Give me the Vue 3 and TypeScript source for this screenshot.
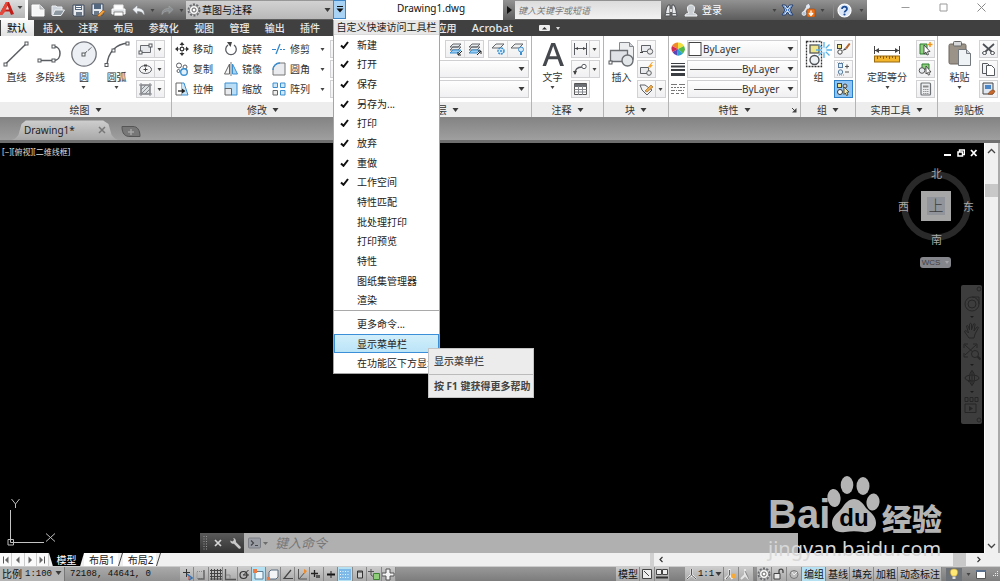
<script setup lang="ts">
import { h, ref } from 'vue'

type IconDef = [number, number, string]

const g = 'fill="none" stroke="#5a5d62"'
const b = 'fill="none" stroke="#3b8fd0"'
const node = (x: number, y: number) =>
  `<rect x="${x - 1.5}" y="${y - 1.5}" width="3" height="3" fill="#fff" stroke="#55585c"/>`

const icons: Record<string, IconDef> = {
  brand: [26, 18, `<path d="M0 13 6 2h3l5 12-3 1-1.500-3.500-4.500 0L2 15H0z" fill="#c11d18"/><path d="M6 2h2L5.500 11 2 15H0v-2z" fill="#e5483b"/><path d="M7.500 5.500 9 9.500H5.800z" fill="#f3dada"/><path d="M17.500 6h5L20 9z" fill="#444"/>`],
  caret: [7, 4, `<path d="M0.500 0h6L3.500 4z" fill="#3a3a3a"/>`],
  caretS: [5, 3, `<path d="M0.500 0h4L2.500 3z" fill="#444"/>`],
  newFile: [14, 13, `<path d="M1 1h8l4 4v7H1z" fill="#f6f6f6" stroke="#fff"/><path d="M9 1v4h4" fill="#c9cdd2" stroke="#aaa" stroke-width=".8"/>`],
  open: [14, 13, `<path d="M1 11V2h4l1 1h5v3" fill="#ccd3da" stroke="#edf0f3"/><path d="M1.500 11.500 4 6h9.500L10 11.500z" fill="#8d979f" stroke="#eceff1"/>`],
  save: [13, 13, `<path d="M1 1h11v11H2l-1-1z" fill="#e6eaef" stroke="#3f4d60"/><path d="M3 1h7v5H3z" fill="#53677f"/><path d="M4 8h6v4H4z" fill="#6a7787"/><path d="M4 2.500h5M4 4.500h5" stroke="#fff"/>`],
  saveAs: [15, 14, `<path d="M1 1h11v11H2l-1-1z" fill="#e6eaef" stroke="#3f4d60"/><path d="M3 1h7v5H3z" fill="#53677f"/><path d="M3 8h5v4H3z" fill="#6a7787"/><path d="m6 13 6-6 2 1.500-5 5z" fill="#f1a23c" stroke="#8e4d10" stroke-width=".6"/>`],
  print: [15, 13, `<path d="M3 5V1h9v4" fill="#fff" stroke="#eee"/><path d="M1 5h13v5H1z" fill="#dfe2e5" stroke="#fff"/><path d="M3 8h9v4H3z" fill="#fff" stroke="#666" stroke-width=".7"/>`],
  undo: [13, 11, `<path d="M1 4.500 5 1v2.500c5 0 7 2 7 6C10.500 7 9 6 5 6v2.500z" fill="#eef2f6" stroke="#dfe6ec" stroke-width=".5"/>`],
  redo: [13, 11, `<path d="M12 4.500 8 1v2.500c-5 0-7 2-7 6C2.500 7 4 6 8 6v2.500z" fill="#8c8f92" stroke="#a5a7a9" stroke-width=".6"/>`],
  gear: [14, 14, `<circle cx="7" cy="7" r="5.500" fill="#f4f4f4" stroke="#66696d" stroke-width="2" stroke-dasharray="2.100 1.350"/><circle cx="7" cy="7" r="4.600" fill="#f0f0f0" stroke="#777" stroke-width=".8"/><circle cx="7" cy="7" r="2" fill="#fff" stroke="#666"/>`],
  qatMore: [8, 7, `<path d="M1 .5h6" stroke="#111"/><path d="M0.500 2.500h7L4 6.500z" fill="#111"/>`],
  play: [5, 8, `<path d="M0 0v8l5-4z" fill="#111"/>`],
  binocular: [14, 13, `<path d="M1 12 2.500 4 4 1h2v11zM13 12l-1.500-8L10 1H8v11z" fill="#e7e9eb" stroke="#4c4f52"/><path d="M6 5h2v3H6z" fill="#ddd"/><path d="M1.500 9.500H6M8 9.500h4.500" stroke="#6a6d70"/>`],
  person: [14, 13, `<path d="M1 12c0-2 2-2.500 4-3C3.500 7 3.500 5.500 3.500 4c0-4 7-4 7 0 0 1.500 0 3-1.500 5 2 .5 4 1 4 3z" fill="#c9ced3" stroke="#f3f5f6"/>`],
  exchange: [13, 12, `<path d="M1 1h3.500l2 3 2-3H12L9 6l3 5H8.500l-2-3-2 3H1l3-5z" fill="#d8e6f5" stroke="#223f70"/><path d="M2.500 2 6 6l-3.500 4M10.500 2 7 6l3.500 4" fill="none" stroke="#3b6fc0"/>`],
  share: [15, 13, `<path d="M2 10 7 2v4" fill="none" stroke="#dfe6ee" stroke-width="2"/><circle cx="3" cy="9.500" r="2" fill="#b4c6da" stroke="#fff" stroke-width=".6"/><circle cx="7" cy="2.500" r="2" fill="#dfe8f2"/><rect x="6" y="5" width="8" height="8" rx="1" fill="#e8731a" stroke="#a74708" stroke-width=".6"/><path d="M10 6.500v3.500M8 9l2 2.500L12 9" stroke="#fff" stroke-width="1.300" fill="none"/>`],
  help: [15, 15, `<circle cx="7.500" cy="7.500" r="6.500" fill="#dbe7f6" stroke="#fff" stroke-width="1.200"/><path d="M5 6c0-3.200 5-3 5 0 0 1.700-2.500 1.700-2.500 3.500" stroke="#1b4b94" stroke-width="1.700" fill="none"/><circle cx="7.500" cy="11.500" r="1.100" fill="#1b4b94"/>`],
  winMin: [9, 9, `<path d="M.5 4.500h8" stroke="#9a9a9a"/>`],
  winMax: [9, 9, `<path d="M1 1h7v7H1z" fill="none" stroke="#9a9a9a"/>`],
  winClose: [9, 9, `<path d="m.5.500 8 8m0-8-8 8" stroke="#8a8a8a"/>`],
  minPanel: [11, 6, `<rect width="11" height="6" rx="1" fill="#eee"/><path d="M3 4.500h5L5.500 2z" fill="#333"/>`],

  line: [28, 28, `<path d="M3 24.500 25 3" ${g} stroke-width="1.500"/>${node(3.5, 24.5)}${node(24.5, 3.5)}`],
  polyline: [28, 28, `<path d="M3 20.500h15c8 0 8-14 0-14" ${g} stroke-width="1.500"/>${node(3.5, 20.5)}${node(17.5, 20.5)}${node(17.5, 6.5)}`],
  circle: [28, 28, `<circle cx="14" cy="14" r="12.200" fill="#eceff3" stroke="#70747a" stroke-width="1.300"/><path d="m14 14 8-7" ${g} stroke-dasharray="4 1"/>${node(13.5, 14.5)}`],
  arc: [28, 28, `<path d="M4 25C5 12 13 4 25 3" ${g} stroke-width="1.500"/>${node(3.5, 25)}${node(10.5, 10.5)}${node(24.5, 3.5)}`],
  rect: [15, 12, `<path d="M2.500 2.500h10v7h-10z" fill="#e6e8eb" stroke="#66696d"/>${node(2.5, 9.5)}${node(12.5, 2.5)}`],
  ellipse: [15, 12, `<ellipse cx="7.500" cy="6.500" rx="6" ry="4" ${g}/><path d="M7.500 4.500v4M5.500 6.500h4" stroke="#444"/><path d="M6 2.500h3" stroke="#444" stroke-width="2"/>`],
  hatch: [15, 14, `<path d="M3 3h9v9H3z" fill="#dcdfe2" stroke="#77797d"/><path d="m3 8 5-5m-5 9 9-9m-5 9 5-5M1 3h13M1 12h13M3 1v13m9-13v13" stroke="#85888c" fill="none"/>`],

  move: [14, 14, `<path d="M7 0 4.500 3h5zM7 14l-2.500-3h5zM0 7l3-2.500v5zM14 7l-3-2.500v5z" fill="#333"/><path d="M7 3v8M3 7h8" stroke="#555" stroke-dasharray="2 1"/><rect x="5.500" y="5.500" width="3" height="3" fill="#fff" stroke="#444"/>`],
  rotate: [14, 14, `<path d="M4 3a5.300 5.300 0 1 0 6 0" ${g} stroke-width="1.300"/><path d="M3 0h5L6.500 5z" fill="#444"/>`],
  trim: [14, 14, `<path d="M0 7.500h4" stroke="#2f86cc"/><path d="m4 12 4-10" stroke="#2f86cc" stroke-width="1.300"/><path d="M8 7.500h6" stroke="#2f86cc" stroke-dasharray="2 1"/>`],
  copy: [14, 14, `<circle cx="4" cy="3.500" r="2.500" ${g}/><circle cx="10" cy="5" r="2" ${g}/><circle cx="3.500" cy="9" r="1.500" ${g}/><circle cx="9" cy="10" r="3.300" fill="#e1f0fa" stroke="#3b8fd0" stroke-width="1.400"/>`],
  mirror: [14, 14, `<path d="M5.500 2v10h-5z" fill="#f5f5f5" stroke="#666"/><path d="M8.500 2v10h5z" fill="#a9d4f1" stroke="#3b8fd0"/><path d="M7 0v14" stroke="#777"/>`],
  fillet: [14, 14, `<path d="M1 13V8c0-4 3-7 7-7h5v12z" fill="#e9ebee" stroke="#777"/><path d="M1 8c0-4 3-7 7-7" ${b} stroke-width="1.500"/>`],
  stretch: [14, 14, `<path d="M1 1h6v12H1z" fill="#fff" stroke="#666"/><path d="M7 1h2l4 12H7" fill="#cde6f6" stroke="#3b8fd0"/><path d="M3 9h5" stroke="#222" stroke-width="1.300"/><path d="m7 6.500 3.500 2.500L7 11.500z" fill="#222"/>`],
  scale: [14, 14, `<path d="M1 1h12v12H7V7H1z" fill="#b9def5" stroke="#3b8fd0"/><path d="M1 6.500h6.500V13H1z" fill="#e8eaed" stroke="#666"/>`],
  array: [14, 14, `<path d="M1 1h4.500v4.500H1zM8.500 1H13v4.500H8.500zM8.500 8.500H13V13H8.500z" fill="#cfe7f7" stroke="#3b8fd0"/><path d="M1 8.500h4.500V13H1z" fill="#eee" stroke="#666"/>`],

  layerA: [15, 14, `<path d="m2 5 3-3h8l-3 3zM2 8l3-3h8l-3 3z" fill="#e6e9ec" stroke="#63676b"/><path d="m2 11 3-3h8l-3 3z" fill="#9ccdf0" stroke="#3b8fd0"/><path d="m14 9-4 4m0-3v3h3" stroke="#222" fill="none"/>`],
  layerB: [15, 14, `<path d="m2 5 3-3h8l-3 3zM2 8l3-3h8l-3 3z" fill="#e6e9ec" stroke="#63676b"/><path d="m2 11 3-3h8l-3 3z" fill="#9ccdf0" stroke="#3b8fd0"/><path d="m10 13 4-4m-3 0h3v3" stroke="#222" fill="none"/>`],
  layerC: [15, 14, `<path d="m1 6 4-4h8l-4 4z" fill="#eee" stroke="#63676b"/><circle cx="10" cy="9" r="3" fill="#d3eafa" stroke="#3b8fd0" stroke-width="1.500" stroke-dasharray="2 .8"/><circle cx="10" cy="9" r="1" fill="#3b8fd0"/>`],
  layerD: [15, 14, `<path d="m1 6 4-4h8l-4 4z" fill="#eee" stroke="#63676b"/><circle cx="11" cy="7.500" r="2.500" fill="#d3eafa" stroke="#3b8fd0"/><path d="M10 10h2v3h-2z" fill="#3b8fd0"/>`],

  text: [28, 28, `<path d="M3.500 26 12.300 3h3.800L25 26h-3.800l-2.400-6.700H9.500L7 26zM10.600 16.300h7.200L14.200 6z" fill="#45484d"/>`],
  dim: [15, 14, `<path d="M1.500 1v12M13.500 1v12M2 6.500h11" ${g}/><path d="M2 6.500 5 5v3zM13 6.500 10 5v3z" fill="#444"/>`],
  leader: [15, 14, `<path d="M2 12c0-5 2-7 7-7" ${g} stroke-width="1.300"/><circle cx="11" cy="4.500" r="2.200" fill="#fff" stroke="#5a5d62"/><path d="M0 9h4l-2 4z" fill="#444"/>`],
  table: [15, 14, `<path d="M1.500 1.500h12v11h-12z" fill="#fff" stroke="#555"/><path d="M1.500 2h12v3h-12z" fill="#6b6f74"/><path d="M1.500 7.500h12m-12 2.500h12M5.500 4v9M9.500 4v9" stroke="#85898d"/>`],
  insert: [28, 28, `<path d="M11.500 2.500h10l4 4v13h-14z" fill="#eceef0" stroke="#85898e"/><path d="M21.500 2.500v4h4" fill="#cfd2d6" stroke="#85898e"/><path d="M2.500 10.500h17v11h-17z" fill="#dfe2e6" stroke="#6b6f74" stroke-width="1.300"/><circle cx="19.500" cy="20.500" r="5.500" fill="#e4e7ea" stroke="#6b6f74" stroke-width="1.400"/>${node(2.5, 22.5)}`],
  blockA: [15, 14, `<path d="M2.500 3.500h9v6h-9z" fill="#e8eaed" stroke="#5e6266"/><circle cx="11" cy="9.500" r="2.700" fill="#eee" stroke="#5e6266"/><path d="M1 10.500h3" stroke="#444"/>`],
  blockB: [15, 14, `<path d="M1.500 5.500h8v6h-8z" fill="#e8eaed" stroke="#5e6266"/><circle cx="10" cy="11" r="2.300" fill="#eee" stroke="#5e6266"/><path d="m13 0-4 5h2L9 8l5-5h-2l2-3z" fill="#f6a62c"/>`],
  blockC: [15, 14, `<path d="M1 3h5l7 5-5 5-5-5z" fill="#f2f3f4" stroke="#5e6266"/><path d="m6 9 6-6 2 2-6 5z" fill="#f0ad4b" stroke="#8d5a1b" stroke-width=".6"/>`],

  wheel: [14, 14, `<path d="M7 7 1 4A6.500 6.500 0 0 1 7 .5z" fill="#ef8b2c"/><path d="M7 7V.5A6.500 6.500 0 0 1 13 4z" fill="#f0df3c"/><path d="m7 7 6-3a6.500 6.500 0 0 1-1 7.500z" fill="#54b848"/><path d="m7 7 5 4.500a6.500 6.500 0 0 1-6 2z" fill="#2ea2cf"/><path d="m7 7-1 6.500a6.500 6.500 0 0 1-4.500-3.500z" fill="#5a44b8"/><path d="m7 7-5.500 3A6.500 6.500 0 0 1 1 4z" fill="#cf2c52"/>`],
  weights: [14, 14, `<path d="M0 1.500h14" stroke="#3b3e42"/><path d="M0 4.500h14" stroke="#3b3e42" stroke-width="2"/><path d="M0 8h14" stroke="#3b3e42" stroke-width="2"/><path d="M0 12.500h14" stroke="#3b3e42" stroke-width="3"/>`],
  dashes: [14, 14, `<path d="M0 2.500h14" stroke="#777" stroke-dasharray="6 2"/><path d="M0 5.500h14" stroke="#777" stroke-dasharray="2 1"/><path d="M0 8.500h14" stroke="#777" stroke-dasharray="4 1 1 1"/><path d="M0 11.500h14" stroke="#777" stroke-dasharray="3 2"/>`],
  swatch: [15, 14, `<rect x="1" y=".5" width="12" height="13" fill="#fff" stroke="#444"/>`],
  longLine: [54, 3, `<path d="M2 1.500h52" stroke="#555"/>`],
  shortLine: [54, 3, `<path d="M6 1.500h48" stroke="#555"/>`],
  launcher: [6, 6, `<path d="m1 1 3 3" stroke="#444"/><path d="M5.500 1v4.500H1z" fill="#444"/>`],

  group: [28, 28, `<rect x="1.500" y="1.500" width="15" height="25" fill="none" stroke="#333" stroke-width="1.300" stroke-dasharray="2 1"/><rect x="5" y="5" width="9" height="8" fill="#eee48b" stroke="#55585c" stroke-width="1.300"/><circle cx="9.500" cy="20" r="4.500" fill="#eef2f5" stroke="#4d5156" stroke-width="1.400"/><path d="M19 2v16M11 10h16M13.500 4.500l11 11m0-11-11 11" stroke="#55b2e8" stroke-width="1.300"/><circle cx="19" cy="10" r="2.500" fill="#e6f6ff"/>`],
  groupA: [15, 14, `<rect x="1.500" y="2.500" width="4" height="4" fill="#eee48b" stroke="#444"/><circle cx="4" cy="10" r="2.200" fill="#fff" stroke="#444"/><path d="m6 9 3-3 1.500 1.500z" fill="#444"/><path d="m9 6 4-5 1.500 1L11 7z" fill="#b5652b"/>`],
  groupB: [15, 14, `<rect x="2.500" y="1.500" width="4" height="4" fill="#dceefa" stroke="#5a7ca0"/><circle cx="4.500" cy="10" r="2.200" fill="#dceefa" stroke="#5a7ca0"/><path d="M9 4.500h4M11 2.500v4M9 10h4" stroke="#555"/><path d="M1 13h7M1 0h7" stroke="#888" stroke-dasharray="1 1"/>`],
  groupC: [15, 14, `<rect x="1.500" y="1.500" width="4" height="4" fill="#eee48b" stroke="#444"/><circle cx="4" cy="10" r="2.500" fill="#fff" stroke="#333"/><circle cx="9" cy="4" r="2" fill="#ccc" stroke="#444"/><path d="m8 5 5 5-2.200.300 1.200 2.700-1.500.500L9.300 11 8 12.500z" fill="#f5e9a8" stroke="#333" stroke-width=".8"/>`],
  measure: [28, 28, `<path d="M1.500 6v8M26.500 6v8M2 10.500h24" stroke="#444"/><path d="m2 10.500 4-2.500v5zM26 10.500 22 8v5z" fill="#444"/><rect x="1.500" y="16" width="25" height="6" fill="#f2b52c" stroke="#9a6a10"/><path d="M4.500 16v3m3-3v2m3-2v3m3-3v2m3-2v3m3-3v2m3-2v3" stroke="#8a5d0c"/>`],
  utilA: [15, 14, `<path d="M2 2h7v10H2z" fill="#8fd07e" stroke="#2c7d2e"/><path d="m6 3 6 6.500-2.500.200 1 2.800-1.500.500-1.200-3L6 12z" fill="#fff" stroke="#333" stroke-width=".8"/><path d="M12 0v5M9.500 2.500h5" stroke="#f0951c" stroke-width="1.500"/>`],
  utilB: [15, 14, `<path d="M4 2h7v5H4z" fill="#8fd07e" stroke="#2c7d2e"/><circle cx="4" cy="8.500" r="2.800" fill="#e7ebee" stroke="#555"/><path d="m8 4 5 6-2.300.100 1 2.500-1.400.500-1-2.500L8 12z" fill="#fff" stroke="#333" stroke-width=".8"/>`],
  calc: [15, 14, `<rect x="3" y="1" width="9.500" height="12" rx="1" fill="#eceef0" stroke="#6d7175" stroke-width="1.200"/><path d="M5 3.500h5.500v2H5z" fill="#888"/><path d="M5 7.500h5.500M5 9.500h5.500M5 11.500h5.500" stroke="#999" stroke-dasharray="1.500 .5"/>`],
  paste: [28, 28, `<rect x="3" y="4" width="17" height="20" rx="1.500" fill="#9b9288" stroke="#6d675f"/><rect x="7.500" y="1.500" width="8" height="4.500" rx="1" fill="#d6d8da" stroke="#666"/><path d="M12.500 9.500h8l4 4v12h-12z" fill="#f0f3f6" stroke="#74797e"/><path d="M20.500 9.500v4h4" fill="#d0d6db" stroke="#74797e"/>`],
  cut: [15, 14, `<path d="m2 2 9 8M13 2 4 10" stroke="#4c5054" stroke-width="1.700"/><ellipse cx="3.500" cy="11" rx="2" ry="1.500" fill="#fff" stroke="#4c5054"/><ellipse cx="11.500" cy="11" rx="2" ry="1.500" fill="#fff" stroke="#4c5054"/>`],
  copyClip: [15, 14, `<path d="M1.500 1.500h5l3 3v7h-8z" fill="#f2f3f4" stroke="#55585c"/><path d="M5.500 3.500h5l3 3v7h-8z" fill="#fff" stroke="#55585c"/>`],
  matchProp: [15, 14, `<path d="M2 1h10v11H2z" fill="#dfe8f2" stroke="#444"/><path d="M4 3h6v4H4z" fill="#4b86c9"/><path d="M7 12c2-3 3-4 5-4l2 1c-1 3-3 4-7 3z" fill="#c8692b" stroke="#6e3410" stroke-width=".5"/>`],
  erase: [15, 14, `<path d="m2 10 7-7 4 3-6 6H3z" fill="#eee" stroke="#777"/>`],

  closeX: [8, 8, `<path d="m1 1 6 6m0-6L1 7" stroke="#777" stroke-width="1.500"/>`],
  newTab: [20, 13, `<path d="M1 1.500h11c4 0 7 3 7 10H9C4 11.500 1 9 1 1.500z" fill="#777" stroke="#555"/><path d="M10 4v6M7 7h6" stroke="#a5a5a5" stroke-width="1.500"/>`],
  check: [9, 8, `<path d="m1 4.500 2.500 2.300L8 1" fill="none" stroke="#111" stroke-width="2"/>`],

  vMin: [8, 8, `<path d="M0 6h7" stroke="#fff" stroke-width="2"/>`],
  vRestore: [8, 8, `<path d="M2.500 3V1h5v4.500H6" fill="none" stroke="#fff" stroke-width="1.400"/><path d="M1 3h4.500v4H1z" fill="none" stroke="#fff" stroke-width="1.500"/>`],
  vClose: [8, 8, `<path d="m1 1 5.500 6m0-6L1 7" stroke="#fff" stroke-width="1.800"/>`],
  compass: [72, 72, `<circle cx="36" cy="36" r="31.500" fill="none" stroke="#292929" stroke-width="6.500"/>`],
  axes: [56, 50, `<path d="M10.500 12v32.500H44" fill="none" stroke="#c4c4c4"/><path d="M8 41.500h5.500V47H8zM11.500 1l4 5m4-5-4 5v4M46 35.500l9 8m0-8-9 8" fill="none" stroke="#bdbdbd"/>`],
  navWheel: [18, 18, `<circle cx="9" cy="9" r="7" fill="none" stroke="#262626"/><circle cx="9" cy="9" r="4" fill="none" stroke="#262626"/><path d="M9 2h7v7" fill="none" stroke="#262626"/>`],
  navHand: [18, 18, `<path d="M6 16 1.500 9.500C2 8 4 9 5.500 11L3.500 4c1-1.500 2 0 3 4V2c1-1.500 2 0 2 0v6l2-6c1-1 2 0 1.500 1l-1 6 3-4c1-.5 2 .5 1 1.500L12 12l-1 4z" fill="none" stroke="#262626"/>`],
  navZoom: [18, 18, `<path d="m2 2 10 9M13 2 2 12M1 5V1h4m5 0h4v4M1 10v4h4" fill="none" stroke="#262626"/><circle cx="12" cy="11" r="3.500" fill="#3d3d3d" stroke="#262626"/><path d="m14.500 13.500 3 3" stroke="#262626" stroke-width="2"/>`],
  navOrbit: [18, 18, `<ellipse cx="9" cy="9" rx="7" ry="3" fill="none" stroke="#262626"/><ellipse cx="9" cy="9" rx="2.500" ry="7" fill="none" stroke="#262626"/><path d="M9 1v16M5 13l3-2" stroke="#262626"/>`],
  navMotion: [18, 18, `<path d="M2 1.500h3v4H2zm5 0h3v4H7zm5 0h3v4h-3zM2 8h11v8.500H2z" fill="none" stroke="#262626"/><path d="m6 10 4 2.500L6 15z" fill="#262626"/>`],
  ring: [6, 6, `<circle cx="3" cy="3" r="2" fill="none" stroke="#262626"/>`],
  caretN: [4, 2, `<path d="M0 0h4L2 2z" fill="#1c1c1c"/>`],

  grip: [5, 14, `<path d="M1 0v14M3.500 0v14" stroke="#999" stroke-dasharray="1 1.500"/>`],
  cmdClose: [8, 8, `<path d="m1 1 6 6m0-6L1 7" stroke="#d6d6d6" stroke-width="1.700"/>`],
  wrench: [12, 12, `<path d="m5.500 5.500 5 5" stroke="#c9c9c9" stroke-width="2.500" stroke-linecap="round"/><path d="M1.200 3.500a3 3 0 0 0 5 2.500 3 3 0 0 0-2-5L5 3 3.500 4.500z" fill="#c9c9c9"/>`],
  prompt: [13, 12, `<rect x=".5" y="1" width="12" height="10" rx="1" fill="#9b9da4" stroke="#7c7e86"/><path d="m3 3.500 2.500 2.500L3 8.500m4 0h3" stroke="#44464c" fill="none" stroke-width="1.200"/>`],
  caretG: [5, 3, `<path d="M0 0h5L2.500 3z" fill="#6c6c6c"/>`],
  up: [9, 6, `<path d="m1 5 3.500-3.500L8 5" fill="none" stroke="#444" stroke-width="1.300"/>`],
  down: [9, 6, `<path d="m1 1 3.500 3.500L8 1" fill="none" stroke="#444" stroke-width="1.300"/>`],
  left: [4, 7, `<path d="m3.500 1-2.500 2.500L3.500 6" fill="none" stroke="#333" stroke-width="1.200"/>`],
  right: [4, 7, `<path d="m.5 1 2.500 2.500L.5 6" fill="none" stroke="#333" stroke-width="1.200"/>`],
  first: [6, 8, `<path d="M.5.500v7" stroke="#555"/><path d="M5.500.500v7L2 4z" fill="#666"/>`],
  prev: [6, 8, `<path d="M4.500.500v7L1 4z" fill="#666"/>`],
  next: [6, 8, `<path d="M1.500.500v7L5 4z" fill="#666"/>`],
  last: [6, 8, `<path d="M5.500.500v7" stroke="#555"/><path d="M.5.500v7L4 4z" fill="#666"/>`],
  slash: [5, 13, `<path d="M4.500 0 .5 13" stroke="#444"/>`],
  paw: [54, 58, `<ellipse cx="20" cy="10" rx="6.300" ry="9"/><ellipse cx="36" cy="11" rx="6.500" ry="9"/><ellipse cx="7" cy="23" rx="6.500" ry="9" transform="rotate(-8 7 23)"/><ellipse cx="46" cy="27" rx="6.500" ry="8.500" transform="rotate(8 46 27)"/><path d="M27 24c5 0 9 4 12 9 5 5 10 8 10 15 0 7-6 10-13 9-6-1-12-1-18 0-8 1-13-2-13-9 0-7 6-10 10-15 3-5 7-9 12-9z"/>`],

  sSnapInfer: [14, 13, `<path d="M3 4.500h7M6.500 1v8" stroke="#333"/><path d="m7 6 5 4-3 2" stroke="#3272b4" fill="none" stroke-width="1.500"/><path d="M9 8v4" stroke="#c43"/>`],
  sSnap: [14, 13, `<path d="M3 3.500h7v7H3z" fill="none" stroke="#888" stroke-dasharray="1 1"/><path d="M10 2v9H4" fill="none" stroke="#666" stroke-width="1.400"/>`],
  sGrid: [14, 13, `<path d="M2.500 1v11M5.500 1v11M8.500 1v11M11.500 1v11M1 2.500h12M1 5.500h12M1 8.500h12M1 11h12" stroke="#444"/>`],
  sOrtho: [14, 13, `<path d="M2.500 1v10.500H13" fill="none" stroke="#555" stroke-width="1.300"/><path d="M3 7h4v4" fill="none" stroke="#888"/>`],
  sPolar: [14, 13, `<circle cx="6.500" cy="7" r="3.500" fill="none" stroke="#333" stroke-width="1.200"/><path d="m6.500 7 5-5M6 7h6" stroke="#333"/>`],
  sOsnap: [14, 13, `<path d="M3 3.500h8v7.500H3z" fill="#eef8fd" stroke="#5c7f93"/><path d="M1 1h4v4H1z" fill="#ee7b41"/>`],
  s3d: [14, 13, `<path d="m3 4 2-2h7v7l-2 2H3z" fill="#f2f4f6" stroke="#5c6f80"/><path d="M1 9h3v3H1z" fill="#ee7b41"/>`],
  sAngle: [14, 13, `<path d="M10 2 3 10.500h9" fill="none" stroke="#444" stroke-width="1.200"/>`],
  sDucs: [14, 13, `<path d="M3.500 1v10H12M4 11l7-8" fill="none" stroke="#555"/><path d="m9 1 3 2-3 3z" fill="#ee8b2b"/>`],
  sDyn: [14, 13, `<path d="M2 5.500h7M5.500 2v7" stroke="#222" stroke-width="1.300"/><path d="M7 7h4v3H7z" fill="#555"/>`],
  sPlus: [14, 13, `<path d="M3 6.500h8" stroke="#111" stroke-width="2"/><path d="M7 3v7" stroke="#222"/>`],
  sTrans: [14, 13, `<path d="M1 1h12v11H1z" fill="#7fb9e8"/><path d="M2 3.500h10M2 6.500h10M2 9.500h10" stroke="#e8f4ff" stroke-dasharray="1 1.500"/>`],
  sQp: [14, 13, `<path d="M4.500 3h5v7h-5z" fill="#ccc" stroke="#333"/><path d="M4 4h6" stroke="#333"/>`],
  sSel: [14, 13, `<path d="M1 3.500h6M4 1v6l4 3" stroke="#555" fill="none"/><path d="M6.500 5.500h6v6h-6z" fill="#8fcd7b" stroke="#3c8432"/>`],
  sAnno: [14, 13, `<path d="M5 1h4v4h4v3H9v4H5V8H1V5h4z" fill="#f3f3f3" stroke="#555"/>`],
  sLayout: [14, 13, `<path d="M2.500 1.500h9v9h-9z" fill="#eee" stroke="#444"/><path d="m4 3 5 5" stroke="#444"/>`],
  sViews: [14, 13, `<path d="M1.500 1.500h5v5h-5zm6 0h5v5h-5z" fill="#eee" stroke="#444"/><path d="M1 9.500h12" stroke="#333" stroke-width="2"/>`],
  sScale: [11, 13, `<path d="M5.500 1v6L1 11m4.500-4 4.500 4M3 8h5" fill="none" stroke="#f2f2f2" stroke-width="2"/><path d="M5.500 1v6L1 11m4.500-4 4.500 4" fill="none" stroke="#555"/>`],
  sScaleB: [14, 13, `<path d="M5.500 1v6L1 11m4.500-4 3 4" fill="none" stroke="#f2f2f2" stroke-width="2"/><path d="M5.500 2v5L2 11" fill="none" stroke="#666"/><circle cx="9.500" cy="8" r="2.500" fill="#f5ab3a"/>`],
  sScaleC: [14, 13, `<path d="M6 1v6l-4 4m4-4 4 4" fill="none" stroke="#e6e6e6" stroke-width="2"/><path d="m6 3 4 8" stroke="#888"/>`],
  sLock: [14, 13, `<path d="M2 5.500h6V11H2z" fill="#e9e9e9" stroke="#444"/><path d="M7 5V3c0-2.500 4-2.500 4 0v2" fill="none" stroke="#444" stroke-width="1.300"/>`],
  sBall: [14, 13, `<circle cx="7" cy="6.500" r="4" fill="#bbb" stroke="#777"/><path d="m5 4 2 3 3-3" stroke="#eee" fill="none"/>`],
  sBulb: [16, 13, `<path d="M0 0h16v13H0z" fill="#6d7278"/><path d="M8 1c5 0 4 5 2 7H6C4 6 3 1 8 1z" fill="#ffe873" stroke="#c9a53a" stroke-width=".6"/><path d="M6.500 8.500h3V11h-3z" fill="#ddd"/>`],
  sClean: [12, 13, `<path d="M1.500 2.500h9v8h-9z" fill="#fff" stroke="#555"/><path d="M1 3h10" stroke="#5a6f8c" stroke-width="2"/>`],
  sGrip: [8, 8, `<path d="M6 1h1v1H6zM4 3h1v1H4zM6 3h1v1H6zM2 5h1v1H2zM4 5h1v1H4zM6 5h1v1H6z" fill="#eee"/>`],
}

const Icon = (props: { name: string }) => {
  const [w, ht, body] = icons[props.name]
  return h('svg', {
    width: w, height: ht, viewBox: `0 0 ${w} ${ht}`, 'aria-hidden': 'true', class: 'ico', innerHTML: body,
  })
}
Icon.props = ['name']

const qat = [
  ['newFile', '新建'], ['open', '打开'], ['save', '保存'], ['saveAs', '另存为'], ['print', '打印'],
]
const tabs = ['插入', '注释', '布局', '参数化', '视图', '管理', '输出', '插件', 'Autodesk 360', '精选应用', 'Acrobat']
const activeTab = ref('默认')

const drawTools = [
  { icon: 'line', label: '直线' }, { icon: 'polyline', label: '多段线' },
  { icon: 'circle', label: '圆', more: true }, { icon: 'arc', label: '圆弧', more: true },
]
const drawSmall = [['rect', '矩形'], ['ellipse', '椭圆'], ['hatch', '图案填充']]
const modifyTools = [
  { icon: 'move', label: '移动' }, { icon: 'rotate', label: '旋转' }, { icon: 'trim', label: '修剪', more: true },
  { icon: 'copy', label: '复制' }, { icon: 'mirror', label: '镜像' }, { icon: 'fillet', label: '圆角', more: true },
  { icon: 'stretch', label: '拉伸' }, { icon: 'scale', label: '缩放' }, { icon: 'array', label: '阵列', more: true },
]

const menuItems = ref([
  { label: '新建', on: true }, { label: '打开', on: true }, { label: '保存', on: true }, { label: '另存为...', on: true },
  { label: '打印', on: true }, { label: '放弃', on: true }, { label: '重做', on: true }, { label: '工作空间', on: true },
  { label: '特性匹配', on: false }, { label: '批处理打印', on: false }, { label: '打印预览', on: false },
  { label: '特性', on: false }, { label: '图纸集管理器', on: false }, { label: '渲染', on: false },
])

const statusLeft = [
  ['sSnapInfer', '推断约束'], ['sSnap', '捕捉模式'], ['sGrid', '栅格显示'], ['sOrtho', '正交模式'], ['sPolar', '极轴追踪'],
  ['sOsnap', '对象捕捉'], ['s3d', '三维对象捕捉'], ['sAngle', '对象捕捉追踪'], ['sDucs', '动态UCS'], ['sDyn', '动态输入'],
  ['sPlus', '线宽'], ['sTrans', '透明度'], ['sQp', '快捷特性'], ['sSel', '选择循环'], ['sAnno', '注释监视器'],
]
const activeStatus = ['sOsnap', 'sTrans']
const statusWords = ['编组', '基线', '填充', '加粗', '动态标注']
const command = ref('')
const query = ref('')
</script>

<template>
  <div class="app">
    <header class="titlebar">
      <button class="brand" aria-label="应用程序菜单"><Icon name="brand" /></button>
      <div class="qat">
        <button v-for="[icon, label] in qat" :key="icon" class="q" :aria-label="label"><Icon :name="icon" /></button>
        <button class="q" aria-label="放弃"><Icon name="undo" /></button>
        <button class="q narrow" aria-label="放弃列表"><Icon name="caretS" /></button>
        <button class="q" aria-label="重做"><Icon name="redo" /></button>
        <button class="q narrow" aria-label="重做列表"><Icon name="caretS" /></button>
        <div class="workspace">
          <Icon name="gear" />
          <select aria-label="工作空间"><option>草图与注释</option></select>
          <Icon name="caret" />
        </div>
      </div>
      <div class="qat-more">
        <button class="more-btn" aria-label="自定义快速访问工具栏" aria-expanded="true"><Icon name="qatMore" /></button>
        <div class="menu" role="menu">
          <div class="menu-head">自定义快速访问工具栏</div>
          <div class="menu-list">
            <button v-for="m in menuItems" :key="m.label" role="menuitemcheckbox" :aria-checked="m.on" @click="m.on = !m.on">
              <span class="tick"><Icon v-if="m.on" name="check" /></span>{{ m.label }}
            </button>
          </div>
          <div class="menu-tail">
            <button role="menuitem"><span class="tick"></span>更多命令...</button>
            <button role="menuitem" class="hot"><span class="tick"></span>显示菜单栏</button>
            <button role="menuitem"><span class="tick"></span>在功能区下方显示</button>
          </div>
          <div class="tooltip" role="tooltip">
            <p>显示菜单栏</p>
            <p class="tip-help">按 F1 键获得更多帮助</p>
          </div>
        </div>
      </div>
      <h1 class="doc-title">Drawing1.dwg</h1>
      <div class="infobar">
        <button class="info-arrow" aria-label="展开搜索"><Icon name="play" /></button>
        <input v-model="query" type="search" aria-label="搜索" placeholder="键入关键字或短语">
        <button class="q" aria-label="搜索"><Icon name="binocular" /></button>
        <button class="login"><Icon name="person" />登录<span class="grow"></span><Icon name="caretS" /></button>
        <button class="q" aria-label="Exchange"><Icon name="exchange" /></button>
        <button class="q share" aria-label="保持连接"><Icon name="share" /><Icon name="caretS" /></button>
        <button class="q help" aria-label="帮助"><Icon name="help" /><Icon name="caretS" /></button>
      </div>
      <div class="window">
        <button aria-label="最小化"><Icon name="winMin" /></button>
        <button aria-label="最大化"><Icon name="winMax" /></button>
        <button aria-label="关闭"><Icon name="winClose" /></button>
      </div>
    </header>

    <nav class="tabs">
      <button class="home" :class="{ active: activeTab === '默认' }" @click="activeTab = '默认'">默认</button>
      <div class="tab-list">
        <button v-for="t in tabs" :key="t" :class="{ active: t === activeTab }" @click="activeTab = t">{{ t }}</button>
      </div>
      <button class="collapse" aria-label="最小化功能区"><Icon name="minPanel" /><i class="tri"></i></button>
    </nav>

    <div class="ribbon">
      <section class="panel draw">
        <div class="body">
          <button v-for="t in drawTools" :key="t.label" class="big">
            <Icon :name="t.icon" /><span>{{ t.label }}</span><Icon v-if="t.more" name="caretS" />
          </button>
          <div class="small">
            <div v-for="[icon, label] in drawSmall" :key="icon" class="split">
              <button :aria-label="label"><Icon :name="icon" /></button>
              <button class="arrow" :aria-label="label + '选项'"><Icon name="caretS" /></button>
            </div>
          </div>
        </div>
        <footer>绘图<Icon name="caret" /></footer>
      </section>

      <section class="panel modify">
        <div class="body">
          <div class="grid3">
            <button v-for="t in modifyTools" :key="t.label">
              <Icon :name="t.icon" /><span>{{ t.label }}</span><Icon v-if="t.more" name="caretS" />
            </button>
          </div>
          <div class="small">
            <button aria-label="删除"><Icon name="erase" /></button>
            <button aria-label="分解"><Icon name="erase" /></button>
            <button aria-label="偏移"><Icon name="erase" /></button>
          </div>
        </div>
        <footer>修改<Icon name="caret" /></footer>
      </section>

      <section class="panel layers">
        <div class="body">
          <div class="layer-row">
            <div class="pair">
              <button aria-label="置为当前"><Icon name="layerA" /></button>
              <button aria-label="匹配图层"><Icon name="layerB" /></button>
            </div>
            <div class="pair">
              <button aria-label="冻结"><Icon name="layerC" /></button>
              <button aria-label="关闭图层"><Icon name="layerD" /></button>
            </div>
          </div>
          <div class="combo"><select aria-label="图层"><option></option></select><Icon name="caret" /></div>
          <div class="combo"><select aria-label="图层状态"><option></option></select><Icon name="caret" /></div>
        </div>
        <footer>图层<Icon name="caret" /></footer>
      </section>

      <section class="panel annot">
        <div class="body">
          <button class="big"><Icon name="text" /><span>文字</span><Icon name="caretS" /></button>
          <div class="small">
            <div class="split"><button aria-label="标注"><Icon name="dim" /></button><button class="arrow" aria-label="标注选项"><Icon name="caretS" /></button></div>
            <div class="split"><button aria-label="引线"><Icon name="leader" /></button><button class="arrow" aria-label="引线选项"><Icon name="caretS" /></button></div>
            <button aria-label="表格"><Icon name="table" /></button>
          </div>
        </div>
        <footer>注释<Icon name="caret" /></footer>
      </section>

      <section class="panel block">
        <div class="body">
          <button class="big"><Icon name="insert" /><span>插入</span></button>
          <div class="small">
            <button aria-label="创建"><Icon name="blockA" /></button>
            <button aria-label="编辑"><Icon name="blockB" /></button>
            <div class="split"><button aria-label="编辑属性"><Icon name="blockC" /></button><button class="arrow" aria-label="属性选项"><Icon name="caretS" /></button></div>
          </div>
        </div>
        <footer>块<Icon name="caret" /></footer>
      </section>

      <section class="panel props">
        <div class="body">
          <div class="prop"><Icon name="wheel" /><div class="combo"><Icon name="swatch" /><select aria-label="颜色"><option>ByLayer</option></select><Icon name="caret" /></div></div>
          <div class="prop"><Icon name="weights" /><div class="combo"><Icon name="longLine" /><select aria-label="线宽"><option>ByLayer</option></select><Icon name="caret" /></div></div>
          <div class="prop"><Icon name="dashes" /><div class="combo"><Icon name="shortLine" /><select aria-label="线型"><option>ByLayer</option></select><Icon name="caret" /></div></div>
        </div>
        <footer>特性<Icon name="caret" /><button class="launch" aria-label="特性选项板"><Icon name="launcher" /></button></footer>
      </section>

      <section class="panel group">
        <div class="body">
          <button class="big"><Icon name="group" /><span>组</span></button>
          <div class="small">
            <button aria-label="解除编组"><Icon name="groupA" /></button>
            <button aria-label="组编辑"><Icon name="groupB" /></button>
            <button class="on" aria-label="启用组选择"><Icon name="groupC" /></button>
          </div>
        </div>
        <footer>组<Icon name="caret" /></footer>
      </section>

      <section class="panel utils">
        <div class="body">
          <button class="big"><Icon name="measure" /><span>定距等分</span><Icon name="caretS" /></button>
          <div class="small">
            <button aria-label="快速选择"><Icon name="utilA" /></button>
            <button aria-label="选择全部"><Icon name="utilB" /></button>
            <button aria-label="计算器"><Icon name="calc" /></button>
          </div>
        </div>
        <footer>实用工具<Icon name="caret" /></footer>
      </section>

      <section class="panel clip">
        <div class="body">
          <button class="big"><Icon name="paste" /><span>粘贴</span><Icon name="caretS" /></button>
          <div class="small">
            <button aria-label="剪切"><Icon name="cut" /></button>
            <button aria-label="复制到剪贴板"><Icon name="copyClip" /></button>
            <button aria-label="特性匹配"><Icon name="matchProp" /></button>
          </div>
        </div>
        <footer>剪贴板</footer>
      </section>
    </div>

    <div class="docbar">
      <div class="doctab">
        <button class="doc-name">Drawing1*</button>
        <button aria-label="关闭图形"><Icon name="closeX" /></button>
      </div>
      <button class="newtab" aria-label="新图形"><Icon name="newTab" /></button>
    </div>

    <main class="work">
      <div class="canvas">
        <div class="vp-label">[−][俯视][二维线框]</div>
        <div class="vp-ctl">
          <button aria-label="最小化视口"><Icon name="vMin" /></button>
          <button aria-label="还原视口"><Icon name="vRestore" /></button>
          <button aria-label="关闭视口"><Icon name="vClose" /></button>
        </div>
        <div class="cube">
          <Icon name="compass" />
          <span class="n">北</span><span class="s">南</span><span class="w">西</span><span class="e">东</span>
          <button class="face"><span>上</span></button>
        </div>
        <button class="wcs">WCS<i class="tri"></i></button>
        <div class="navbar">
          <Icon name="ring" class="end" />
          <button aria-label="全导航控制盘"><Icon name="navWheel" /></button>
          <Icon name="caretN" />
          <button aria-label="平移"><Icon name="navHand" /></button>
          <button aria-label="范围缩放"><Icon name="navZoom" /></button>
          <Icon name="caretN" />
          <button aria-label="动态观察"><Icon name="navOrbit" /></button>
          <Icon name="caretN" />
          <button aria-label="ShowMotion"><Icon name="navMotion" /></button>
          <Icon name="ring" class="end" />
        </div>
        <div class="axes"><Icon name="axes" /></div>
        <div class="cmd">
          <div class="cmd-tools">
            <Icon name="grip" />
            <button aria-label="关闭命令行"><Icon name="cmdClose" /></button>
            <button aria-label="自定义"><Icon name="wrench" /></button>
          </div>
          <div class="cmd-box">
            <Icon name="prompt" /><Icon name="caretG" />
            <input v-model="command" aria-label="命令" placeholder="键入命令">
          </div>
        </div>
        <div class="watermark">
          <div class="wm-row">
            <b class="bai">Bai</b>
            <div class="paw"><Icon name="paw" /><b>du</b></div>
            <b class="jy">经验</b>
          </div>
          <div class="wm-url">jingyan.baidu.com</div>
        </div>
      </div>
      <div class="vscroll">
        <button aria-label="向上滚动"><Icon name="up" /></button>
        <div class="vthumb"></div>
        <span class="grow"></span>
        <button aria-label="向下滚动"><Icon name="down" /></button>
      </div>
    </main>

    <div class="layouts">
      <div class="steps">
        <button aria-label="第一个"><Icon name="first" /></button>
        <button aria-label="上一个"><Icon name="prev" /></button>
        <button aria-label="下一个"><Icon name="next" /></button>
        <button aria-label="最后一个"><Icon name="last" /></button>
      </div>
      <button class="lt current">模型</button>
      <button class="lt">布局1</button><Icon name="slash" />
      <button class="lt">布局2</button><Icon name="slash" />
      <span class="grow"></span>
      <div class="hscroll">
        <button aria-label="向左滚动"><Icon name="left" /></button>
        <span class="grow"></span>
        <div class="hthumb"></div>
        <button aria-label="向右滚动"><Icon name="right" /></button>
      </div>
    </div>

    <footer class="status">
      <button class="scale">比例 <span class="mono">1:100</span><Icon name="caret" /></button>
      <output class="coords mono">72108, 44641, 0</output>
      <div class="toggles">
        <button v-for="[icon, label] in statusLeft" :key="icon" :aria-label="label" :class="{ lit: activeStatus.includes(icon) }"><Icon :name="icon" /></button>
      </div>
      <span class="grow"></span>
      <div class="cells views">
        <button class="word">模型</button>
        <button aria-label="布局"><Icon name="sLayout" /></button>
        <button aria-label="快速查看"><Icon name="sViews" /></button>
      </div>
      <div class="cells scales">
        <button class="anno"><Icon name="sScale" /><span class="mono">1:1</span><Icon name="caret" /></button>
        <button aria-label="注释可见性"><Icon name="sScaleB" /></button>
        <button aria-label="自动缩放"><Icon name="sScaleC" /></button>
      </div>
      <div class="cells extras">
        <button aria-label="切换工作空间"><Icon name="gear" /></button>
        <button aria-label="锁定"><Icon name="sLock" /></button>
        <button aria-label="硬件加速"><Icon name="sBall" /></button>
        <button v-for="w in statusWords" :key="w" class="word" :class="{ lit: w === '编组' }">{{ w }}</button>
      </div>
      <div class="ends">
        <button aria-label="隔离对象"><Icon name="sBulb" /></button>
        <button aria-label="状态栏菜单"><Icon name="caretS" /></button>
        <button aria-label="全屏显示"><Icon name="sClean" /></button>
        <Icon name="sGrip" />
      </div>
    </footer>
  </div>
</template>

<style>
body { background: #fff; }
.ico { display: block; flex: none; }
</style>

<style scoped>
.app {
  min-height: 100vh; display: flex; flex-direction: column; overflow: hidden;
  font: 10px/14px "Noto Sans", "Noto Sans CJK SC", sans-serif; color: #333;
}
.app * { box-sizing: border-box; }
button, select, input {
  appearance: none; border: 0; border-radius: 0; background: none; margin: 0; padding: 0; font: inherit; color: inherit;
  min-width: 0; outline: none;
}
button { display: flex; align-items: center; justify-content: center; white-space: nowrap; cursor: pointer; }
.grow { flex: 1; }
.mono { font: 9px/14px "Liberation Mono", monospace; }
.tri { border: 2px solid transparent; border-top: 3px solid #ddd; border-bottom: 0; }

.titlebar { display: flex; height: 20px; background: #fff; }
.brand { width: 25px; margin-right: 3px; background: linear-gradient(#ddd, #b5b5b5); height: 18px; justify-content: flex-start; }
.qat { width: 305px; display: flex; align-items: center; background: linear-gradient(#999, #5c5c5c); }
.q { width: 20px; height: 20px; gap: 4px; flex: none; }
.q.narrow { width: 9px; }
.workspace { flex: 1; height: 18px; display: flex; align-items: center; background: linear-gradient(#d2d2d2, #b8b8b8); padding: 0 2px 0 1px; gap: 1px; }
.workspace select { flex: 1; color: #111; height: 18px; }
.qat-more { position: relative; width: 13px; }
.more-btn { width: 13px; height: 19px; background: #a9d3f5; border: 1px solid #3f86c6; }
.doc-title { width: 157px; margin: 0; padding-left: 13px; text-align: center; font: 10px/17px "Noto Sans", sans-serif; color: #111; }
.infobar { flex: 1; display: flex; align-items: center; background: linear-gradient(#929292, #5c5c5c); color: #fff; }
.info-arrow { width: 12px; height: 20px; }
.infobar input { width: 146px; height: 18px; background: linear-gradient(#dcdcdc, #f2f2f2); color: #222; padding: 0 3px; font-size: 9px; font-style: italic; }
.infobar input::placeholder, .cmd-box input::placeholder { color: #777; opacity: 1; }
.login { flex: 1; gap: 4px; padding-left: 3px; }
.share { width: 32px; }
.help { width: 34px; border-left: 1px solid #888; height: 16px; gap: 7px; margin-left: 4px; }
.window { width: 133px; display: flex; justify-content: space-between; padding: 0 14px 5px 34px; }

.menu { position: absolute; z-index: 10; left: 0; top: 20px; width: 107px; background: #fff; border: 1px solid #a5a5a5; border-top: 0; color: #222; }
.menu-head { height: 15px; background: #e8e8e8; text-align: center; line-height: 15px; white-space: nowrap; border-bottom: 1px solid #dadada; }
.menu-list { display: grid; grid-template-rows: repeat(14, 1fr); height: 275px; }
.menu button { justify-content: flex-start; width: 100%; }
.tick { width: 23px; flex: none; display: flex; justify-content: center; padding-right: 2px; }
.menu-tail { border-top: 1px solid #a9a9a9; padding-top: 3px; }
.menu-tail button { height: 20px; }
.menu-tail .hot { background: linear-gradient(#d3effb, #b9e4f7); box-shadow: inset 0 0 0 1px #3a8fd8; height: 19px; }
.tooltip { position: absolute; left: 94px; top: 328px; width: 106px; background: #ececec; border: 1px solid #c4c4c4; color: #444; font-weight: 500; }
.tooltip p { margin: 0; padding: 0 5px; height: 25px; line-height: 24px; white-space: nowrap; }
.tooltip .tip-help { border-top: 1px solid #bbb; font-weight: 700; height: 23px; line-height: 22px; }

.tabs { display: flex; height: 16px; background: #404040; color: #e8e8e8; padding-left: 1px; }
.tabs button { height: 16px; font-weight: 500; }
.tabs .home { padding: 0 7px 0 6px; margin-right: 9px; }
.tab-list { display: flex; justify-content: space-between; width: 470px; }
.tab-list button:nth-child(9) { width: 66px; }
.tab-list button:nth-child(11) { font-size: 11px; }
.tabs .active { background: linear-gradient(#f8f8f8, #e3e3e3); color: #222; }
.tabs .collapse { margin-left: 26px; gap: 6px; }

.ribbon { display: grid; grid-template-columns: 172fr 183fr 177fr 72fr 65fr 132fr 55fr 82fr 62fr; height: 81px; background: #fff; }
.panel { display: flex; flex-direction: column; min-width: 0; border-right: 1px solid #b4b4b4; }
.panel:last-child { border-right: 0; }
.body { flex: 1; display: flex; justify-content: space-between; padding: 4px 2px 0; min-height: 0; }
.panel > footer { position: relative; height: 15px; background: #ededed; display: flex; align-items: center; justify-content: center; gap: 5px; color: #333; }
.launch { position: absolute; right: 3px; top: 5px; }
.big { flex-direction: column; justify-content: flex-start; height: 60px; flex: 1 0 auto; }
.big span { line-height: 16px; margin-top: 1px; }
.big > :nth-child(3) { margin-top: 1px; }
.draw .body { padding: 4px 6px 0 0; }
.draw .small { margin-left: 3px; }
.small { display: flex; flex-direction: column; gap: 2px; flex: none; align-items: flex-start; }
.small > button, .split, .pair { height: 18px; border: 1px solid #d2d2d4; background: linear-gradient(#fbfbfb, #f0f0f2); }
.small > button { width: 19px; }
.split, .pair { display: flex; }
.split button, .pair button { width: 17px; }
.split .arrow { width: 10px; border-left: 1px solid #d2d2d4; }
.small .on { background: #8ec4f3; border-color: #2b7fc9; }
.grid3 { display: grid; grid-template-columns: 49px 48px 57px; grid-template-rows: repeat(3, 20px); }
.grid3 button { justify-content: flex-start; gap: 4px; height: 18px; }
.grid3 button > :nth-child(3) { margin-left: 6px; }
.modify .body { justify-content: flex-start; gap: 1px; padding-left: 3px; }
.modify .small > button { width: 20px; }
.layers .body { flex-direction: column; justify-content: flex-start; gap: 2px; }
.layer-row { display: flex; gap: 4px; justify-content: flex-end; padding-right: 2px; }
.pair { width: 39px; }
.pair button { flex: 1; }
.pair button + button { border-left: 1px solid #dcdcde; }
.combo { display: flex; align-items: center; height: 18px; border: 1px solid #d0d0d2; background: linear-gradient(#fefefe, #f0f0f2); padding-right: 3px; flex: 1; min-width: 0; }
.layers .combo { flex: none; }
.combo select { flex: 1; height: 16px; line-height: 16px; }
.annot .body { padding-right: 3px; }
.props .body { flex-direction: column; justify-content: flex-start; gap: 2px; }
.prop { display: flex; align-items: center; gap: 2px; }

.docbar { display: flex; height: 26px; background: linear-gradient(#838383, #9f9f9f); border-bottom: 3px solid #6f6f6f; padding: 0 0 0 12px; align-items: flex-end; }
.doctab { width: 106px; height: 20px; display: flex; align-items: center; justify-content: space-between; padding: 0 12px; color: #222; background: linear-gradient(#cfcfcf, #a8a8a8); clip-path: polygon(0 100%, 3% 92%, 6% 75%, 9% 20%, 13% 2%, 86% 2%, 91% 20%, 94% 75%, 97% 92%, 100% 100%); }
.newtab { height: 18px; margin-left: 3px; }

.work { flex: 1; display: flex; min-height: 300px; background: #000; }
.canvas { position: relative; flex: 1; }
.vp-label { padding: 3px 2px; font-size: 8px; line-height: 12px; color: #ddd; }
.vp-ctl { position: absolute; right: 6px; top: 6px; display: flex; gap: 5px; }
.cube { position: absolute; right: 12px; top: 27px; width: 72px; height: 72px; color: #a8a8a8; font-size: 11px; line-height: 14px; }
.cube > span { position: absolute; }
.n { left: 31px; top: -3px; } .s { left: 31px; bottom: -5px; } .w { left: -2px; top: 30px; } .e { right: -2px; top: 30px; }
.face { position: absolute; left: 21px; top: 21px; width: 30px; height: 30px; background: #a6a6a6; }
.face span { width: 18px; height: 18px; background: #91949a; color: #3c3c3c; font: 300 15px/16px "Noto Sans CJK SC", sans-serif; }
.wcs { position: absolute; right: 33px; top: 114px; width: 31px; height: 11px; border-radius: 3px; background: #85858c; color: #3f3f44; font: 8px/11px "Liberation Sans", sans-serif; gap: 5px; }
.wcs .tri { border-top-color: #a5a5ab; }
.navbar { position: absolute; right: 2px; top: 142px; width: 21px; height: 139px; background: #3d3d3d; border-radius: 2px; display: flex; flex-direction: column; align-items: center; justify-content: space-between; padding: 1px 0; }
.end { align-self: flex-end; }
.axes { position: absolute; left: 0; bottom: 7px; height: 48px; }
.cmd { position: absolute; left: 200px; right: 186px; bottom: 0; height: 20px; display: flex; }
.cmd-tools { width: 44px; display: flex; align-items: center; justify-content: space-around; background: linear-gradient(#5a5a5a, #333); }
.cmd-box { flex: 1; display: flex; align-items: center; gap: 2px; background: #b0b0b0; padding-left: 4px; }
.cmd-box input { flex: 1; height: 20px; padding-left: 5px; font-size: 13px; font-style: italic; }
.watermark { position: absolute; right: 36px; bottom: -9px; width: 180px; color: #b4b4b4; z-index: 2; }
.wm-row { display: flex; align-items: flex-end; height: 60px; padding-bottom: 2px; }
.bai { font: bold 40px/38px "Liberation Sans", sans-serif; width: 59px; }
.paw { position: relative; height: 58px; fill: #b4b4b4; }
.paw b { position: absolute; left: 0; width: 54px; text-align: center; bottom: 1px; color: #000; font: bold 24px/28px "Liberation Sans", sans-serif; }
.jy { font: 900 30px/32px "Noto Sans CJK SC", sans-serif; margin-left: 1px; }
.wm-url { font: 20px/27px "Noto Sans", sans-serif; color: #d8d8d8; }

.vscroll { width: 16px; background: #f0f0f0; border-left: 1px solid #fff; border-right: 2px solid #aaa; display: flex; flex-direction: column; align-items: center; }
.vscroll button { height: 15px; width: 13px; }
.vthumb { margin-top: 26px; width: 13px; height: 13px; background: #c8c8c8; }

.layouts { height: 13px; display: flex; background: #f0f0f0; color: #222; }
.steps { display: flex; width: 49px; }
.steps button { flex: 1; background: #fafafa; border-right: 1px solid #ccc; }
.lt { padding: 0 3px 0 5px; background: #fff; height: 13px; }
.current { background: #000; color: #fff; width: 35px; padding: 0; clip-path: polygon(0 0, 100% 0, 89% 100%, 11% 100%); }
.hscroll { width: 35%; display: flex; border-left: 4px solid #d0d0d0; }
.hscroll button { width: 14px; }
.hscroll button:last-child { width: 34px; padding-right: 9px; }
.hthumb { width: 13px; background: #c8c8c8; }

.status { display: flex; height: 15px; background: linear-gradient(#999, #7c7c7c); border-top: 1px solid #ccc; color: #111; }
.scale { width: 65px; gap: 3px; border-right: 1px solid #777; background: #b4b4b4; }
.scale > :last-child { margin-top: -3px; }
.coords { width: 115px; padding-left: 5px; background: linear-gradient(#aaa, #909090); }
.toggles { width: 216px; display: grid; grid-template-columns: repeat(15, 1fr); }
.toggles button, .cells button { background: linear-gradient(#ccc, #a8a8a8); border-right: 1px solid #888; overflow: hidden; }
.toggles button.lit, .cells button.lit { background: #b4e0f2; }
.cells { display: flex; }
.views { margin-right: 15px; }
.scales { margin-right: 3px; }
.extras { margin-right: 4px; }
.cells button { min-width: 14px; max-width: 46px; }
.cells .word { padding: 0 1px 0 2px; }
.cells .anno { width: 39px; gap: 1px; }
.ends { display: flex; align-items: center; gap: 4px; width: 54px; }
</style>
